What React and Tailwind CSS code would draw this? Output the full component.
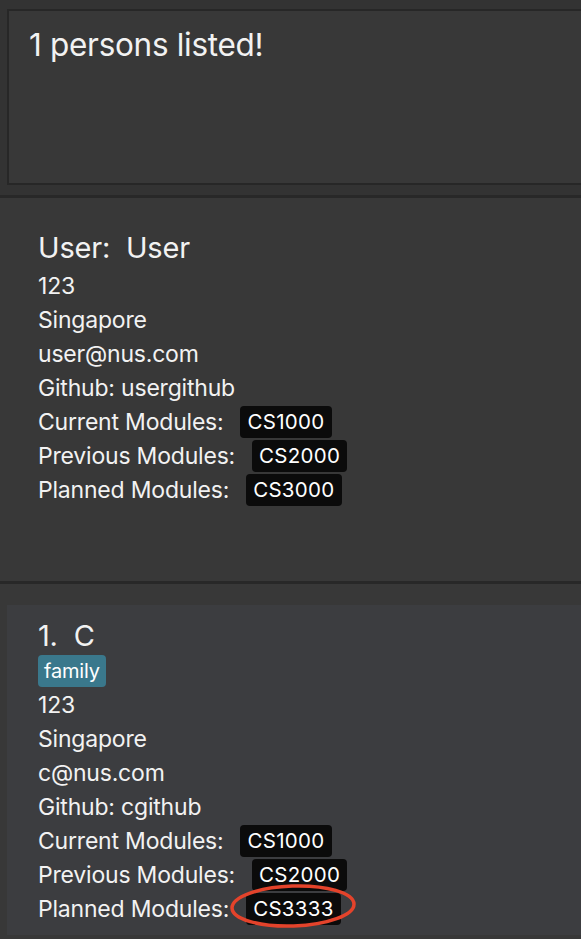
import React from 'react'

const user = {
  name: 'User',
  phone: '123',
  address: 'Singapore',
  email: 'user@nus.com',
  github: 'usergithub',
  current: ['CS1000'],
  previous: ['CS2000'],
  planned: ['CS3000'],
}

const person = {
  name: 'C',
  tags: ['family'],
  phone: '123',
  address: 'Singapore',
  email: 'c@nus.com',
  github: 'cgithub',
  current: ['CS1000'],
  previous: ['CS2000'],
  planned: ['CS3333'],
}

function ModuleRow({ label, mods }) {
  return (
    <div className="flex items-center h-[34px]">
      <span>{label}</span>
      {mods.map(m => (
        <span
          key={m}
          className="ml-[17px] h-[32px] px-[7px] flex items-center bg-[#0b0b0b] rounded-[4px] text-[20.5px] tracking-[0.3px] text-white"
        >
          {m}
        </span>
      ))}
    </div>
  )
}

function Details({ p }) {
  return (
    <>
      <div className="h-[34px] leading-[34px]">{p.phone}</div>
      <div className="h-[34px] leading-[34px]">{p.address}</div>
      <div className="h-[34px] leading-[34px]">{p.email}</div>
      <div className="h-[34px] leading-[34px]">Github: {p.github}</div>
      <ModuleRow label="Current Modules:" mods={p.current} />
      <ModuleRow label="Previous Modules:" mods={p.previous} />
      <ModuleRow label="Planned Modules:" mods={p.planned} />
    </>
  )
}

export default function App() {
  return (
    <div
      className="relative w-[581px] h-[939px] overflow-hidden bg-[#333333] text-[#f2f2f2]"
      style={{ fontFamily: 'Inter, "Liberation Sans", sans-serif' }}
    >
      {/* result display */}
      <div className="h-[195px] pt-[9px] pl-[7px]">
        <div className="h-[176px] w-[600px] border-2 border-[#272727] bg-[#383838] pl-[20px] pt-[16px] text-[31.5px] leading-[36px] tracking-[-0.3px]">
          1 persons listed!
        </div>
      </div>

      <div className="h-[3px] bg-[#282828]" />

      {/* user panel */}
      <div className="h-[383px] bg-[#383838] pl-[38px] pt-[32px] text-[23px] tracking-[-0.2px]">
        <div className="h-[36px] leading-[36px] text-[29px] mb-[3px]">
          User:&nbsp; {user.name}
        </div>
        <Details p={user} />
      </div>

      <div className="h-[3px] bg-[#282828]" />

      {/* person list */}
      <div className="h-[355px] bg-[#383838] pt-[21px] pl-[7px]">
        <div className="h-[330px] bg-[#3c3d40] pl-[31px] pt-[13px] text-[23px] tracking-[-0.2px]">
          <div className="h-[36px] leading-[36px] text-[29px]">1.&nbsp; {person.name}</div>
          <div className="flex items-center h-[34px]">
            {person.tags.map(t => (
              <span
                key={t}
                className="h-[32px] px-[6px] flex items-center bg-[#3a788c] rounded-[4px] text-[20px] text-white"
              >
                {t}
              </span>
            ))}
          </div>
          <Details p={person} />
        </div>
      </div>

      {/* annotation */}
      <svg className="absolute left-0 top-0 pointer-events-none" width="581" height="939">
        <ellipse
          cx="293"
          cy="906"
          rx="61"
          ry="20"
          fill="none"
          stroke="#e4432b"
          strokeWidth="3.5"
          transform="rotate(-2 293 906)"
        />
      </svg>
    </div>
  )
}
